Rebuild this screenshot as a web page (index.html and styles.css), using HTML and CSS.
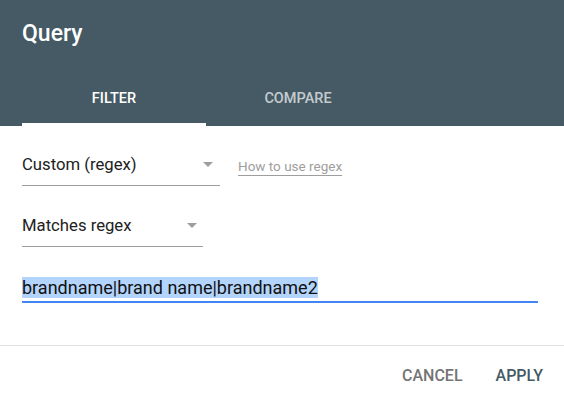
FILE: index.html
```html
<!DOCTYPE html>
<html lang="en">
<head>
<meta charset="utf-8">
<title>Query</title>
<link rel="stylesheet" href="styles.css">
</head>
<body>
<div class="dialog">
  <header class="header">
    <h1 class="title">Query</h1>
    <nav class="tabs">
      <div class="tab active">FILTER</div>
      <div class="tab">COMPARE</div>
    </nav>
  </header>
  <main class="content">
    <div class="row">
      <div class="select select-wide">
        <span class="select-value">Custom (regex)</span>
        <span class="caret"></span>
      </div>
      <a class="help-link" href="#">How to use regex</a>
    </div>
    <div class="row row-second">
      <div class="select select-narrow">
        <span class="select-value">Matches regex</span>
        <span class="caret"></span>
      </div>
    </div>
    <div class="input">
      <span class="selected">brandname|brand name|brandname2</span>
    </div>
  </main>
  <footer class="footer">
    <button class="btn btn-cancel">CANCEL</button>
    <button class="btn btn-apply">APPLY</button>
  </footer>
</div>
</body>
</html>
```

FILE: styles.css
```css
* { box-sizing: border-box; }
html, body { margin: 0; padding: 0; background: #ffffff; }
body { font-family: Roboto, "Liberation Sans", sans-serif; color: #212121; }

.dialog { width: 564px; height: 405px; background: #fff; }

.header {
  background: #455a64;
  height: 126px;
  padding: 21px 0 0 22px;
}
.title {
  margin: 0;
  font-size: 23px;
  line-height: 26px;
  font-weight: 500;
  color: #ffffff;
}
.tabs {
  display: flex;
  margin-top: 30px;
}
.tab {
  width: 184px;
  height: 49px;
  line-height: 43px;
  text-align: center;
  font-size: 14.5px;
  font-weight: 500;
  color: rgba(255, 255, 255, 0.7);
  border-bottom: 3px solid transparent;
}
.tab.active {
  color: #ffffff;
  border-bottom-color: #ffffff;
}

.content { padding: 0 26px 0 22px; }

.row {
  display: flex;
  align-items: flex-start;
  margin-top: 29px;
}
.row-second { margin-top: 30px; }

.select {
  display: flex;
  justify-content: space-between;
  align-items: flex-start;
  font-size: 16.7px;
  line-height: 20px;
  padding-bottom: 10px;
  border-bottom: 1px solid #9e9e9e;
}
.select-wide { width: 198px; padding-right: 7px; }
.select-narrow { width: 181px; padding-right: 6px; }
.select-value { color: #212121; }
.caret {
  width: 0;
  height: 0;
  margin-top: 7px;
  border-left: 5px solid transparent;
  border-right: 5px solid transparent;
  border-top: 5px solid #9e9e9e;
}

.help-link {
  margin-left: 18px;
  margin-top: 3px;
  font-size: 13.5px;
  line-height: 16px;
  color: #9e9e9e;
  text-decoration: underline;
  text-underline-offset: 4px;
}

.input {
  margin-top: 30px;
  font-size: 18px;
  line-height: normal;
  padding-bottom: 3px;
  border-bottom: 2px solid #4285f4;
}
.selected {
  background: #b3d4fc;
  color: #111111;
}

.footer {
  margin-top: 42px;
  border-top: 1px solid #e0e0e0;
  padding: 12px 13px 0 0;
  display: flex;
  justify-content: flex-end;
  gap: 17px;
}
.btn {
  background: none;
  border: none;
  font-family: Roboto, "Liberation Sans", sans-serif;
  font-size: 16px;
  font-weight: 500;
  line-height: 36px;
  padding: 0 8px;
  margin: 0;
}
.btn-cancel { color: #757575; }
.btn-apply { color: #455a64; }
```
